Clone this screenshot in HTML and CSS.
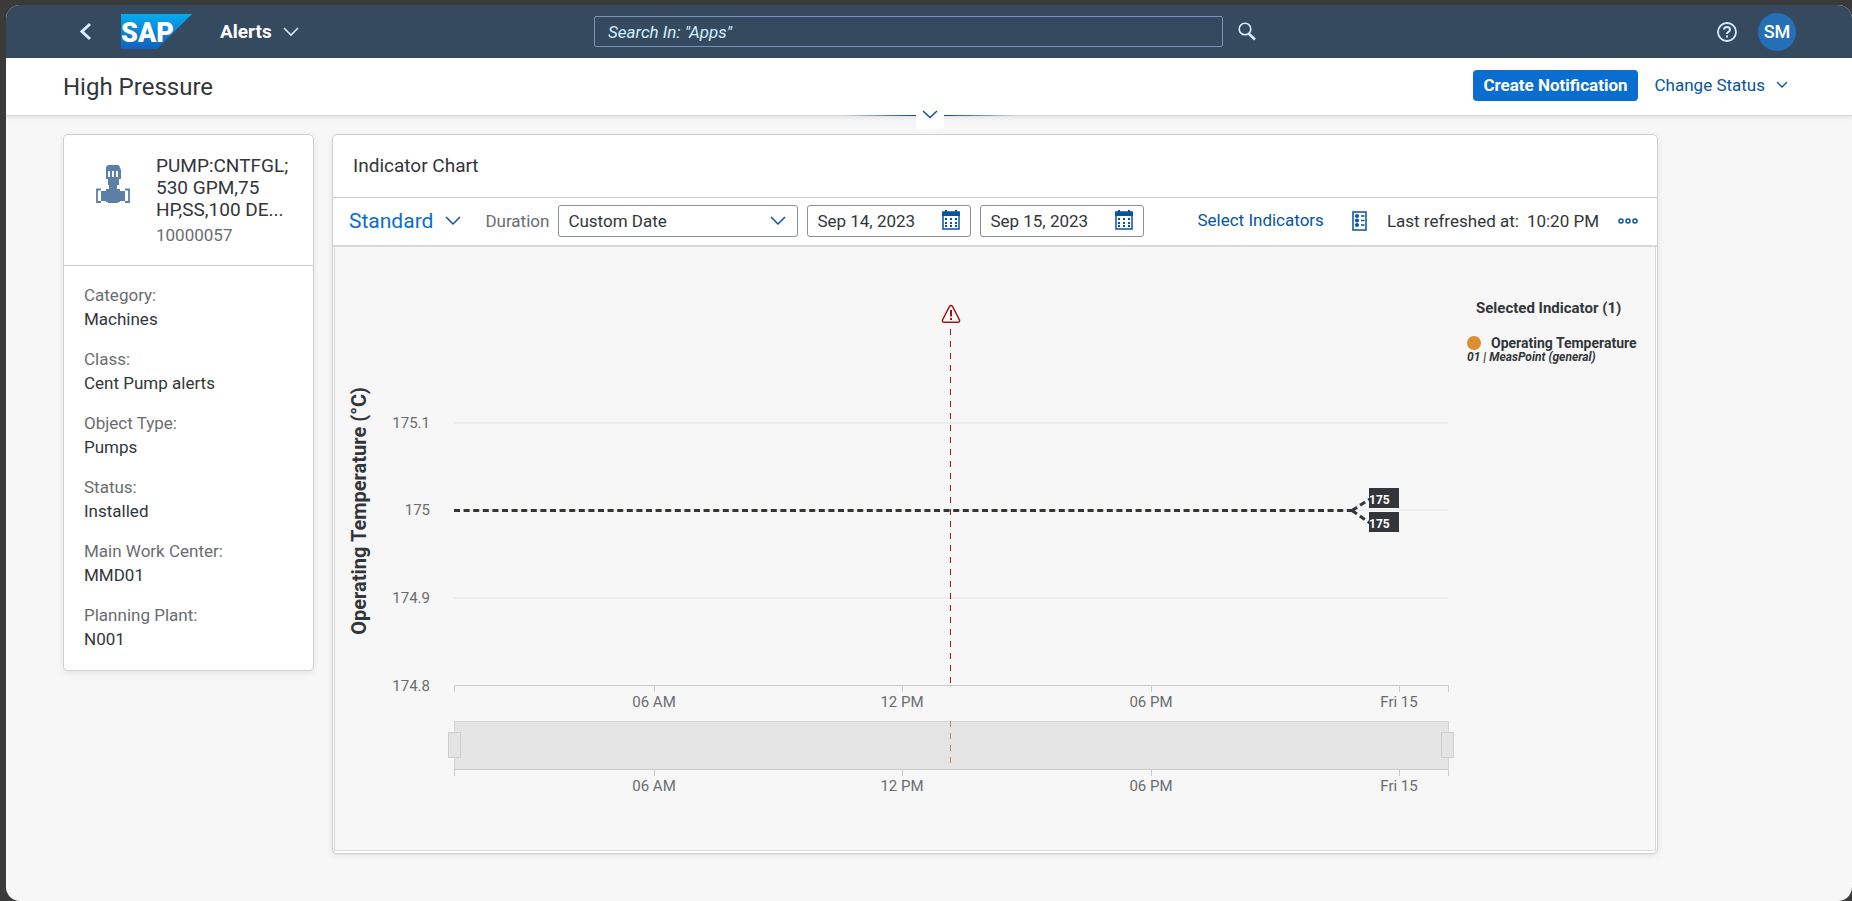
FILE: index.html
```html
<!DOCTYPE html>
<html lang="en">
<head>
    <meta charset="UTF-8">
    <meta name="viewport" content="width=device-width, initial-scale=1.0">
    <title>High Pressure - Alerts</title>
    <link rel="stylesheet" href="styles.css">
</head>
<body>
    <div class="app">
        <header class="shell">
            <div class="shell-left">
                <button class="icon-button back" aria-label="Back">
                    <svg width="13" height="19" viewBox="0 0 13 19"><path d="M11 2 L3 9.500 L11 17" fill="none" stroke="#d1efff" stroke-width="3"/></svg>
                </button>
                <svg class="logo" width="72" height="36" viewBox="0 0 72 36" role="img">
                    <defs>
                        <linearGradient id="logoFill" x1="0" y1="0" x2="0" y2="1">
                            <stop offset="0" stop-color="#00aeef"/>
                            <stop offset="0.250" stop-color="#0a97e0"/>
                            <stop offset="1" stop-color="#1260c0"/>
                        </linearGradient>
                    </defs>
                    <path d="M0 0 H71 L36 35 H0 Z" fill="url(#logoFill)"/>
                    <text class="logo-text" x="0" y="28">SAP</text>
                </svg>
                <button class="shell-title">
                    Alerts
                    <svg width="16" height="10" viewBox="0 0 16 10"><path d="M1 1 L8 8 L15 1" fill="none" stroke="#d1efff" stroke-width="1.600"/></svg>
                </button>
            </div>
            <div class="shell-search">
                <input type="text" class="search-input" placeholder='Search In: "Apps"' aria-label="Search">
                <button class="icon-button" aria-label="Start search">
                    <svg width="20" height="20" viewBox="0 0 20 20" fill="none" stroke="#d1efff"><circle cx="8" cy="7" r="5.800" stroke-width="1.600"/><path d="M11.500 11.500 L18 17.500" stroke-width="2.600"/></svg>
                </button>
            </div>
            <div class="shell-right">
                <button class="icon-button" aria-label="Help">
                    <svg width="20" height="20" viewBox="0 0 20 20" fill="none" stroke="#d1efff"><circle cx="10" cy="10" r="9" stroke-width="1.800"/><path d="M7 7.500 Q7 5 10 5 Q13 5 13 7.500 Q13 9 11.500 9.800 Q10 10.600 10 12" stroke-width="2"/><path d="M10 13.500 V15.500" stroke-width="2"/></svg>
                </button>
                <button class="avatar">SM</button>
            </div>
        </header>

        <div class="page-header">
            <h1>High Pressure</h1>
            <div class="page-actions">
                <button class="primary">Create Notification</button>
                <button class="link-button">
                    Change Status
                    <svg width="12" height="8" viewBox="0 0 12 8"><path d="M1 1 L6 6 L11 1" fill="none" stroke="#0854a0" stroke-width="1.300"/></svg>
                </button>
            </div>
            <div class="expander">
                <button class="expander-button" aria-label="Expand header">
                    <svg width="16" height="9" viewBox="0 0 16 9"><path d="M1 1 L8 7.500 L15 1" fill="none" stroke="#0854a0" stroke-width="1.500"/></svg>
                </button>
            </div>
        </div>

        <main class="content">
            <section class="card object-card">
                <div class="object-head">
                    <svg class="pump" width="34" height="38" viewBox="0 0 34 38" fill="#5b7fa8">
                        <path fill-rule="evenodd" d="M12 0 H22 Q24 1 24 3 L25 5 V14 H23 V20 H21 V24 H24 V26 H29 V36 H24 V37 H22 V38 H12 V37 H10 V36 H5 V26 H10 V24 H13 V20 H12 V14 H10 V5 L10 3 Q10 1 12 0 Z M12 6 V12 H14 V6 Z M16 6 V12 H18 V6 Z M20 6 V12 H22 V6 Z"/>
                        <path d="M5 24.500 H1 V37 H5 M29 24.500 H33 V37 H29" fill="none" stroke="#5b7fa8" stroke-width="1.800"/>
                    </svg>
                    <div>
                        <h2>PUMP:CNTFGL;<br>530 GPM,75<br>HP,SS,100 DE...</h2>
                        <p>10000057</p>
                    </div>
                </div>
                <dl class="details">
                    <div><dt>Category:</dt><dd>Machines</dd></div>
                    <div><dt>Class:</dt><dd>Cent Pump alerts</dd></div>
                    <div><dt>Object Type:</dt><dd>Pumps</dd></div>
                    <div><dt>Status:</dt><dd>Installed</dd></div>
                    <div><dt>Main Work Center:</dt><dd>MMD01</dd></div>
                    <div><dt>Planning Plant:</dt><dd>N001</dd></div>
                </dl>
            </section>

            <section class="card chart-card">
                <h2 class="chart-title">Indicator Chart</h2>
                <div class="toolbar">
                    <button class="view-button">
                        Standard
                        <svg width="16" height="10" viewBox="0 0 16 10"><path d="M1 1 L8 8 L15 1" fill="none" stroke="#0854a0" stroke-width="1.500"/></svg>
                    </button>
                    <label for="duration">Duration</label>
                    <div class="select-box">
                        <select id="duration">
                            <option>Custom Date</option>
                        </select>
                        <svg width="16" height="10" viewBox="0 0 16 10"><path d="M1 1 L8 8 L15 1" fill="none" stroke="#0854a0" stroke-width="1.500"/></svg>
                    </div>
                    <div class="date-box">
                        <input type="text" value="Sep 14, 2023" aria-label="Start date">
                        <svg width="18" height="20" viewBox="0 0 18 20"><path d="M1 2 H17 V19 H1 Z" fill="#fff" stroke="#0854a0" stroke-width="1.500"/><path d="M0 2 H3 V0 H5 V2 H13 V0 H15 V2 H18 V6 H0 Z" fill="#0854a0"/><path d="M3 9 H15 M3 13 H15 M3 16 H15" stroke="#0854a0" stroke-width="2" stroke-dasharray="2 3"/></svg>
                    </div>
                    <div class="date-box">
                        <input type="text" value="Sep 15, 2023" aria-label="End date">
                        <svg width="18" height="20" viewBox="0 0 18 20"><path d="M1 2 H17 V19 H1 Z" fill="#fff" stroke="#0854a0" stroke-width="1.500"/><path d="M0 2 H3 V0 H5 V2 H13 V0 H15 V2 H18 V6 H0 Z" fill="#0854a0"/><path d="M3 9 H15 M3 13 H15 M3 16 H15" stroke="#0854a0" stroke-width="2" stroke-dasharray="2 3"/></svg>
                    </div>
                    <div class="toolbar-right">
                        <button class="link-button">Select Indicators</button>
                        <button class="icon-button legend-toggle" aria-label="Legend">
                            <svg width="15" height="20" viewBox="0 0 15 20" fill="none" stroke="#0854a0"><rect x="1" y="1" width="13" height="18" stroke-width="1.500"/><path d="M9 5 H12.500 M9 9.500 H12.500 M9 14 H12.500" stroke-width="1.300"/><g fill="#0854a0" stroke="none"><circle cx="5" cy="5" r="2"/><circle cx="5" cy="9.500" r="2"/><circle cx="5" cy="14" r="2"/></g></svg>
                        </button>
                        <span>Last refreshed at:</span>
                        <span class="refresh-time">10:20 PM</span>
                        <button class="icon-button" aria-label="More">
                            <svg width="20" height="6" viewBox="0 0 20 6" fill="none" stroke="#0854a0" stroke-width="1.500"><circle cx="3" cy="3" r="2"/><circle cx="10" cy="3" r="2"/><circle cx="17" cy="3" r="2"/></svg>
                        </button>
                    </div>
                </div>

                <div class="chart-area">
                    <svg class="chart" viewBox="1 -2 1126 603">
                        <text class="axis-title" transform="translate(32 262) rotate(-90)" text-anchor="middle">Operating Temperature (°C)</text>

                        <!-- y axis -->
                        <g class="tick-label" text-anchor="end">
                            <text x="96" y="179">175.1</text>
                            <text x="96" y="266">175</text>
                            <text x="96" y="354">174.9</text>
                            <text x="96" y="442">174.8</text>
                        </g>
                        <path class="grid-line" d="M120 174 H1114 M120 261 H1114 M120 349 H1114"/>

                        <!-- x axis -->
                        <path class="axis-line" d="M120.500 443 V436.500 H1114.500 V443 M320.500 437 V443 M568.500 437 V443 M817.500 437 V443 M1065.500 437 V443"/>
                        <g class="tick-label" text-anchor="middle">
                            <text x="320" y="458">06 AM</text>
                            <text x="568" y="458">12 PM</text>
                            <text x="817" y="458">06 PM</text>
                            <text x="1065" y="458">Fri 15</text>
                        </g>

                        <!-- range slider -->
                        <rect class="range" x="120.500" y="472.500" width="994" height="48"/>
                        <path class="axis-line" d="M120.500 527 V520.500 H1114.500 V527 M320.500 521 V527 M568.500 521 V527 M817.500 521 V527 M1065.500 521 V527"/>
                        <rect class="handle" x="114.500" y="483.500" width="12" height="25"/>
                        <rect class="handle" x="1107.500" y="483.500" width="12" height="25"/>
                        <path d="M616.500 472 V515" stroke="#b98a62" stroke-dasharray="6 6"/>
                        <g class="tick-label" text-anchor="middle">
                            <text x="320" y="542">06 AM</text>
                            <text x="568" y="542">12 PM</text>
                            <text x="817" y="542">06 PM</text>
                            <text x="1065" y="542">Fri 15</text>
                        </g>

                        <!-- alert -->
                        <path d="M616.500 80 V434" stroke="#a51212" stroke-dasharray="6 6"/>
                        <path d="M615.500 57.500 Q617 55.500 618.500 57.500 L625.500 71 Q626 73 624 73.300 H610 Q608 73 608.500 71 Z" fill="#fff" stroke="#a51212" stroke-width="1.500"/>
                        <path d="M617 61 V67.500 M617 69 V71" stroke="#a51212" stroke-width="2"/>

                        <!-- readings -->
                        <path class="reading" d="M120 261.500 H1018"/>
                        <path class="reading" d="M1018 261.500 L1036 250 M1018 261.500 L1036 274"/>
                        <rect x="1035" y="239" width="30" height="20" fill="#32363a"/>
                        <rect x="1035" y="263" width="30" height="20" fill="#32363a"/>
                        <text class="reading-label" x="1035" y="255">175</text>
                        <text class="reading-label" x="1035" y="279">175</text>
                    </svg>
                    <div class="legend">
                        <h3>Selected Indicator (1)</h3>
                        <div class="legend-item"><span class="dot"></span>Operating Temperature</div>
                        <em>01 | MeasPoint (general)</em>
                    </div>
                </div>
            </section>
        </main>
    </div>
</body>
</html>
```
FILE: styles.css
```css
* {
    box-sizing: border-box;
}

body {
    margin: 0;
    padding: 5px 0 0 6px;
    background-color: #3a3a3a;
    color: #32363a;
    font-family: Roboto, "Noto Sans", sans-serif;
    font-size: 17px;
    line-height: 24px;
}

h1, h2, h3, p, dl, dd {
    margin: 0;
    font-weight: normal;
}

button, input, select {
    font: inherit;
    color: inherit;
}

button {
    display: flex;
    align-items: center;
    padding: 0;
    border: none;
    background: none;
    cursor: pointer;
    white-space: nowrap;
}

svg {
    display: block;
    flex: none;
}

.app {
    min-height: calc(100vh - 5px);
    background-color: #f7f7f7;
    border-radius: 14px;
    overflow: hidden;
}

/* shell bar */
.shell {
    display: flex;
    align-items: center;
    height: 53px;
    padding: 0 56px 0 73px;
    background-color: #354a5f;
    color: #fff;
}

.shell-left,
.shell-right {
    display: flex;
    align-items: center;
    flex: 1;
}

.shell-right {
    justify-content: flex-end;
    gap: 21px;
}

.logo {
    margin-left: 29px;
}

.logo-text {
    font-size: 27px;
    font-weight: 900;
    fill: #fff;
}

.shell-title {
    gap: 11px;
    margin-left: 27px;
    font-size: 19px;
    font-weight: bold;
}

.shell-search {
    display: flex;
    align-items: center;
    gap: 14px;
    width: 687px;
    padding-right: 24px;
}

.search-input {
    flex: 1;
    min-width: 0;
    height: 31px;
    padding: 0 13px;
    background: none;
    border: 1px solid #7996b8;
    border-radius: 2px;
}

.search-input::placeholder {
    color: #d1efff;
    font-style: italic;
    opacity: 1;
}

.avatar {
    justify-content: center;
    width: 38px;
    height: 38px;
    border-radius: 50%;
    background-color: #246fb6;
    font-size: 18px;
    font-weight: 500;
}

/* page header */
.page-header {
    position: relative;
    display: flex;
    align-items: center;
    justify-content: space-between;
    height: 58px;
    padding: 0 64px 0 57px;
    background-color: #fff;
    border-bottom: 1px solid #d9d9d9;
    box-shadow: 0 2px 4px rgba(0, 0, 0, 0.08);
}

h1 {
    font-size: 24px;
}

.page-actions {
    display: flex;
    gap: 17px;
    padding-bottom: 2px;
}

.primary {
    height: 31px;
    padding: 0 10px 2px;
    border-radius: 4px;
    background-color: #0a6ed1;
    color: #fff;
    font-weight: bold;
}

.link-button {
    gap: 11px;
    padding-bottom: 2px;
    color: #0854a0;
}

.expander {
    position: absolute;
    left: 50%;
    bottom: -1px;
    width: 176px;
    height: 1px;
    margin-left: -87px;
    background: linear-gradient(to right, transparent, #0854a0 40%, #0854a0 60%, transparent);
}

.expander-button {
    position: absolute;
    left: 74px;
    top: -8px;
    justify-content: center;
    align-items: flex-start;
    width: 28px;
    height: 22px;
    padding-top: 3px;
    border-radius: 4px;
    background-color: #fff;
}

/* cards */
.content {
    display: flex;
    align-items: flex-start;
    gap: 18px;
    max-width: 1652px;
    padding: 18px 0 47px 57px;
}

.card {
    background-color: #fff;
    border: 1px solid #d0d0d0;
    border-radius: 5px;
    box-shadow: 0 2px 6px rgba(0, 0, 0, 0.08);
}

.object-card {
    flex: none;
    width: 251px;
}

.object-head {
    display: flex;
    gap: 26px;
    padding: 20px 0 12px 32px;
    border-bottom: 1px solid #ccc;
}

.pump {
    margin-top: 10px;
}

.object-head h2 {
    font-size: 19px;
    line-height: 22px;
}

.object-head p {
    padding: 2px 0 6px;
    color: #6a6d70;
}

.details {
    display: flex;
    flex-direction: column;
    gap: 16px;
    padding: 17px 20px 19px;
}

.details dt {
    color: #6a6d70;
}

.chart-card {
    flex: 1;
    min-width: 0;
}

.chart-title {
    padding: 19px 20px;
    border-bottom: 1px solid #ccc;
    font-size: 19px;
}

.toolbar {
    display: flex;
    align-items: center;
    height: 49px;
    padding: 0 19px 2px 16px;
    border-bottom: 2px solid #d9d9d9;
    white-space: nowrap;
}

.view-button {
    gap: 12px;
    margin-right: 24px;
    color: #0a6ed1;
    font-size: 21px;
}

.toolbar label {
    margin-right: 9px;
    color: #6a6d70;
}

.select-box,
.date-box {
    position: relative;
    width: 240px;
    height: 32px;
    margin-right: 9px;
}

.date-box {
    width: 164px;
}

.select-box select,
.date-box input {
    width: 100%;
    height: 100%;
    padding: 0 9px;
    border: 1px solid #89919a;
    border-radius: 3px;
    background-color: #fff;
    appearance: none;
}

.select-box svg {
    position: absolute;
    right: 12px;
    top: 11px;
    pointer-events: none;
}

.date-box svg {
    position: absolute;
    right: 11px;
    top: 5px;
}

.toolbar-right {
    display: flex;
    align-items: center;
    margin-left: auto;
}

.legend-toggle {
    margin: 0 20px 0 28px;
}

.refresh-time {
    margin: 0 19px 0 8px;
}

/* chart */
.chart-area {
    display: flex;
    margin: 0 1px 2px;
    border: 1px solid #d9d9d9;
    border-top: none;
    background-color: #f7f7f7;
}

.chart {
    flex: 1;
    min-width: 0;
}

.axis-title {
    font-size: 20px;
    font-weight: bold;
    fill: #32363a;
}

.tick-label {
    font-size: 15px;
    fill: #6a6d70;
}

.grid-line {
    stroke: #ececec;
    stroke-width: 2;
}

.axis-line {
    fill: none;
    stroke: #cacaca;
}

.range {
    fill: #e4e4e4;
    stroke: #d5d5d5;
}

.handle {
    fill: #e4e4e4;
    stroke: #cfcfcf;
}

.reading {
    fill: none;
    stroke: #32363a;
    stroke-width: 3;
    stroke-dasharray: 6 3.6;
}

.reading-label {
    font-size: 12px;
    font-weight: bold;
    fill: #fff;
}

.legend {
    flex: none;
    width: 194px;
    padding: 49px 0 0 6px;
    font-size: 14px;
    line-height: 14px;
    font-weight: bold;
}

.legend h3 {
    margin: 0 0 16px 9px;
    font-size: 15px;
    line-height: 24px;
    font-weight: bold;
}

.legend-item {
    display: flex;
    align-items: center;
    gap: 10px;
}

.legend em {
    display: block;
    font-size: 12px;
}

.dot {
    width: 14px;
    height: 14px;
    border-radius: 50%;
    background-color: #db8f2f;
}
```
